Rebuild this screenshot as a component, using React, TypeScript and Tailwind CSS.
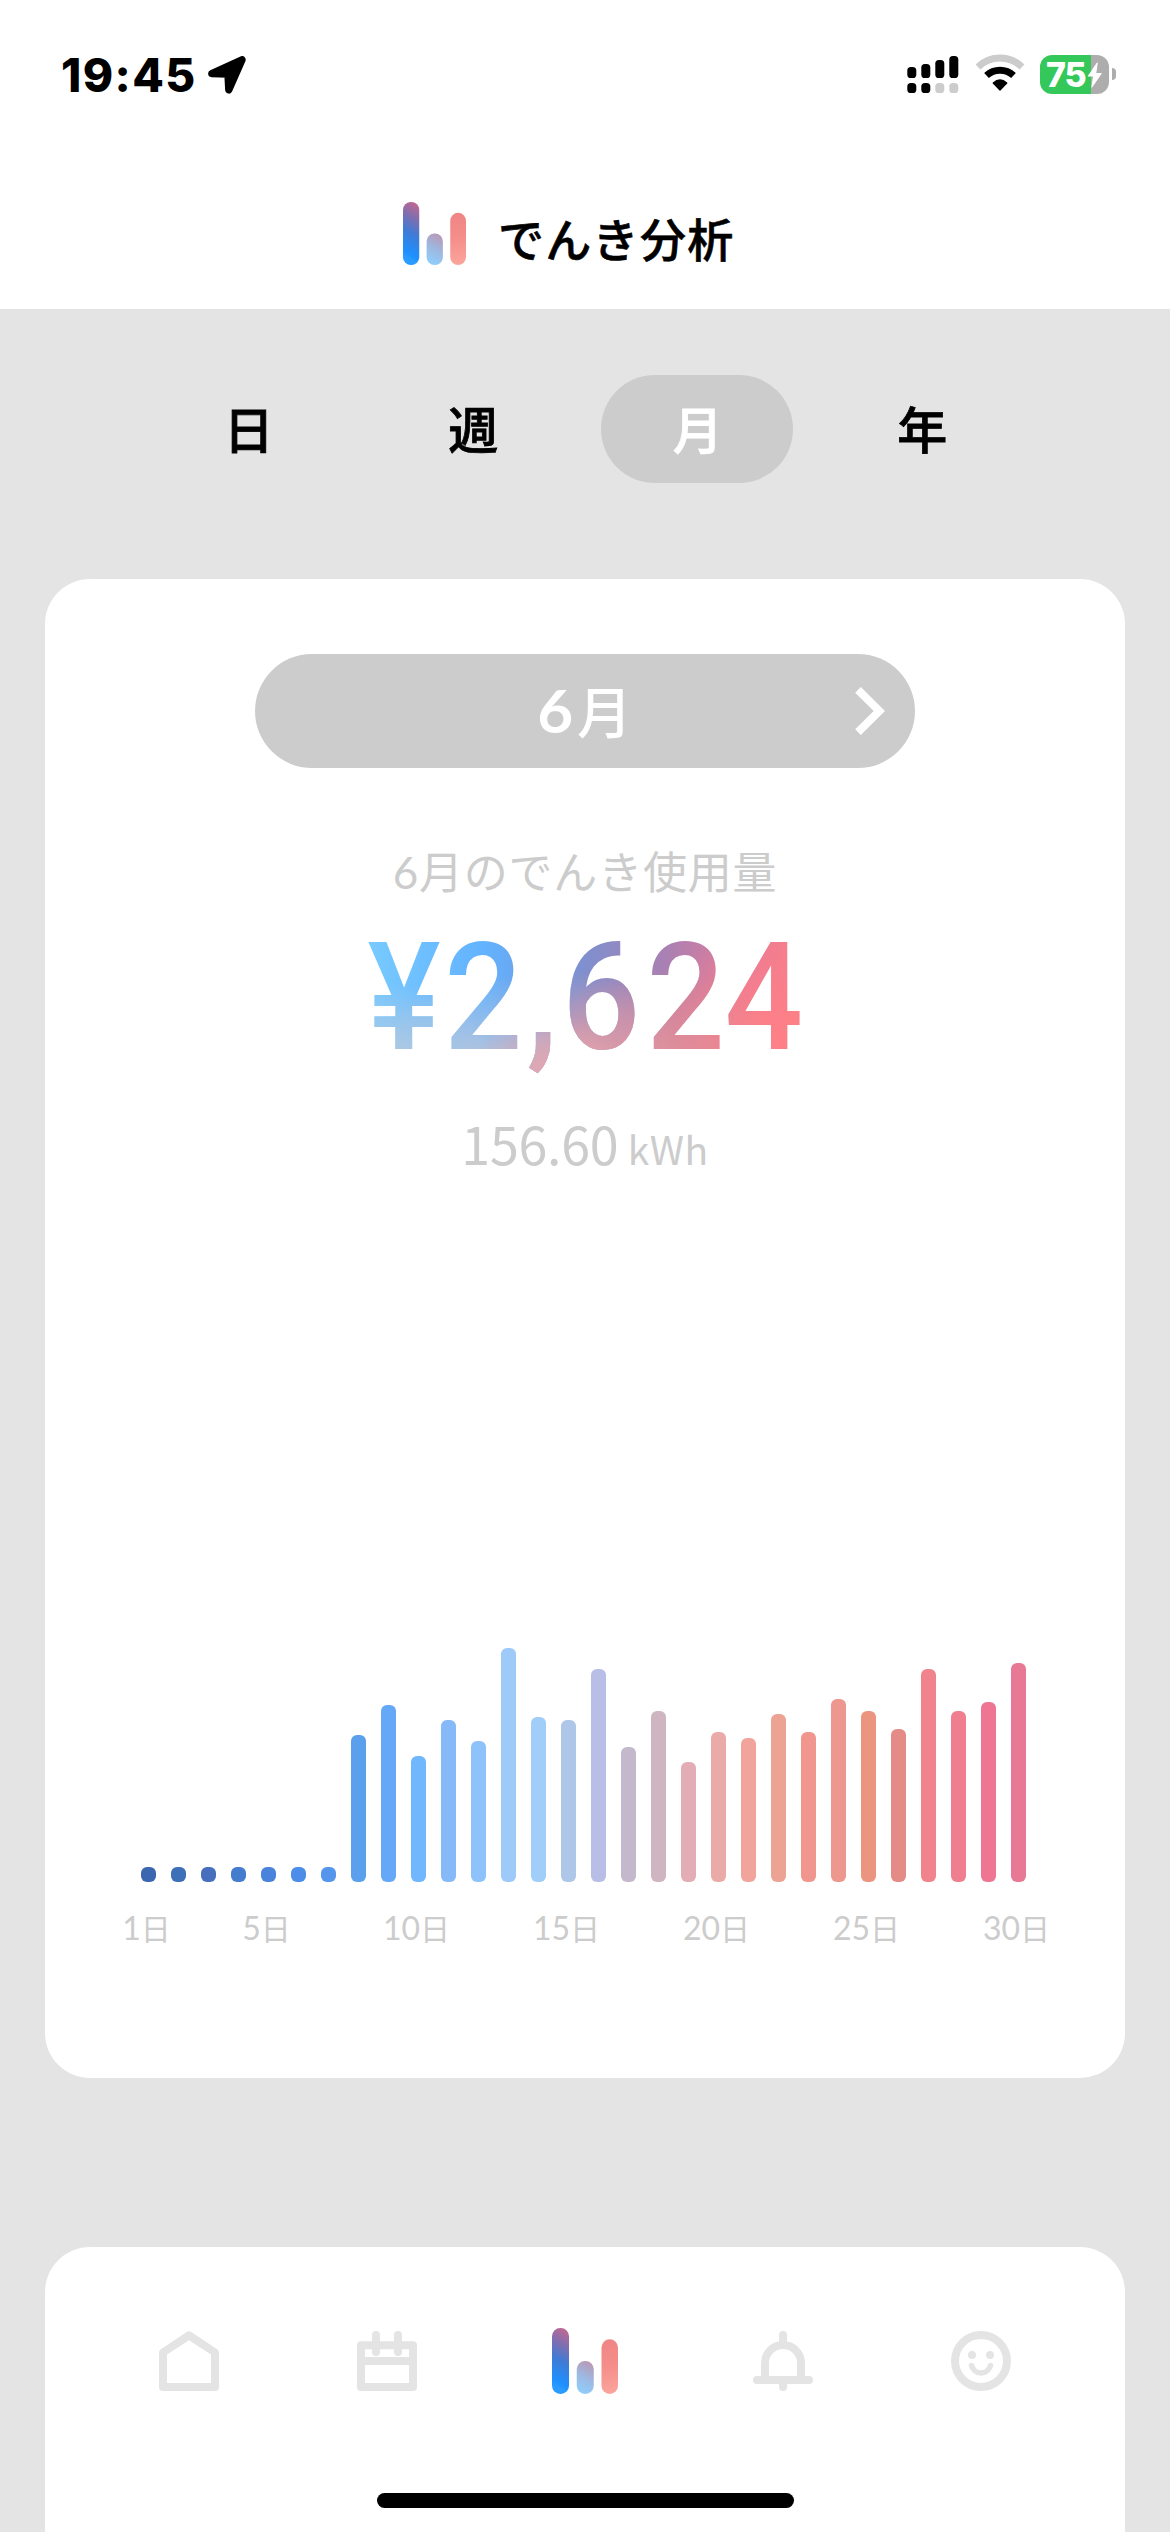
import React from "react";

const BARS: { h: number; c: string }[] = [
  { h: 15, c: "#3b67b0" },
  { h: 15, c: "#3d70b6" },
  { h: 15, c: "#476fbd" },
  { h: 15, c: "#447dce" },
  { h: 15, c: "#4a83db" },
  { h: 15, c: "#4b8de9" },
  { h: 15, c: "#5596ec" },
  { h: 147, c: "#5aa0ec" },
  { h: 177, c: "#66a8f8" },
  { h: 126, c: "#71b7fe" },
  { h: 162, c: "#85b9f8" },
  { h: 141, c: "#8dc3fa" },
  { h: 234, c: "#9dcaf9" },
  { h: 165, c: "#a1cef9" },
  { h: 162, c: "#aec6e8" },
  { h: 213, c: "#b8bee6" },
  { h: 135, c: "#c4b8cc" },
  { h: 171, c: "#cfb5bf" },
  { h: 120, c: "#e2adb5" },
  { h: 150, c: "#eaaba8" },
  { h: 144, c: "#f1a49c" },
  { h: 168, c: "#eca394" },
  { h: 150, c: "#f1968f" },
  { h: 183, c: "#ed978e" },
  { h: 171, c: "#eb9580" },
  { h: 153, c: "#e58b87" },
  { h: 213, c: "#f1838c" },
  { h: 171, c: "#ef7f8e" },
  { h: 180, c: "#ee7692" },
  { h: 219, c: "#e77995" },
];

const LABELLED = [1, 5, 10, 15, 20, 25, 30];
const TABS = ["日", "週", "月", "年"];

function LogoBars({ id, className }: { id: string; className: string }) {
  return (
    <svg viewBox="0 0 64 64" preserveAspectRatio="none" className={className}>
      <defs>
        <linearGradient id={id + "a"} gradientUnits="userSpaceOnUse" x1="24" y1="6" x2="-2" y2="54">
          <stop offset="0" stopColor="#c56790" />
          <stop offset="0.3" stopColor="#7a6fb2" />
          <stop offset="0.55" stopColor="#3f7bd6" />
          <stop offset="0.9" stopColor="#1e90ff" />
          <stop offset="1" stopColor="#2b9cff" />
        </linearGradient>
        <linearGradient id={id + "b"} gradientUnits="userSpaceOnUse" x1="42" y1="37" x2="28" y2="62">
          <stop offset="0" stopColor="#b79ab8" />
          <stop offset="0.5" stopColor="#9db9e2" />
          <stop offset="1" stopColor="#90cdfa" />
        </linearGradient>
        <linearGradient id={id + "c"} gradientUnits="userSpaceOnUse" x1="52" y1="12" x2="60" y2="64">
          <stop offset="0" stopColor="#ef8585" />
          <stop offset="0.5" stopColor="#f58f8b" />
          <stop offset="1" stopColor="#fba59d" />
        </linearGradient>
      </defs>
      <rect x="0" y="0" width="16.5" height="64" rx="8" fill={`url(#${id}a)`} />
      <rect x="24" y="32" width="16.5" height="32" rx="8" fill={`url(#${id}b)`} />
      <rect x="48" y="11" width="16" height="53" rx="8" fill={`url(#${id}c)`} />
    </svg>
  );
}

function StatusBar() {
  return (
    <div className="flex h-[150px] items-start justify-between pl-[61px] pr-[54px] font-[Inter]">
      <div className="mt-[47px] flex h-14 items-center">
        <span className="w-[147px] whitespace-nowrap text-[46px] font-extrabold leading-[56px] tracking-[1.4px] text-black">19:45</span>
        <svg viewBox="0 0 38 38" className="size-[38px]">
          <path d="M3.8 17.5 L34 3.8 L20.8 33.8 L20 18 Z" fill="#000" stroke="#000" strokeWidth="7.4" strokeLinejoin="round" />
        </svg>
      </div>
      <div className="mt-[54px] flex h-10 items-start">
        <svg viewBox="0 0 52 38" className="mt-[2px] h-[38px] w-[52px]">
          <rect x="0.3" y="11" width="9" height="11" rx="3.6" />
          <rect x="14.3" y="8" width="9" height="14" rx="3.6" />
          <rect x="28.3" y="4" width="9" height="18" rx="3.6" />
          <rect x="42.3" y="0" width="9" height="22" rx="3.6" />
          <rect x="0.3" y="27" width="9" height="10" rx="3.6" />
          <rect x="14.3" y="27" width="9" height="10" rx="3.6" />
          <rect x="28.3" y="27" width="9" height="10" rx="3.6" fill="#ccc" />
          <rect x="42.3" y="27" width="9" height="10" rx="3.6" fill="#ccc" />
        </svg>
        <svg viewBox="0 0 50 38" className="ml-[16px] h-[38px] w-[50px]" fill="none">
          <path d="M3 13 A31.5 31.5 0 0 1 47 13" stroke="#ccc" strokeWidth="7" />
          <path d="M11.5 21.5 A20 20 0 0 1 38.5 21.5" stroke="#000" strokeWidth="7" />
          <path d="M18.3 29 Q25 22.8 31.7 29 L25 36 Z" fill="#000" stroke="#000" strokeWidth="1.4" strokeLinejoin="round" />
        </svg>
        <div className="relative ml-[15px] mt-[0.5px] flex h-[39px] w-[69px] items-center overflow-hidden rounded-[12px] bg-[linear-gradient(90deg,#34c759_0_51px,#adadad_51px)]">
          <span className="ml-[6px] mt-px text-[34px] font-extrabold leading-none tracking-[-1.2px] text-white">75</span>
          <svg viewBox="0 0 18 26" className="absolute left-[47px] top-[7px] h-[26px] w-[16px]" preserveAspectRatio="none">
            <path d="M11.5 1 L1.5 14 H7.5 L5.5 25 L16 11.5 H9.8 Z" fill="#fff" stroke="#fff" strokeWidth="1.2" strokeLinejoin="round" />
          </svg>
        </div>
        <div className="ml-[3px] mt-[14px] h-[12px] w-[4px] rounded-r-full bg-[#adadad]" />
      </div>
    </div>
  );
}

function NavIcon({ children }: { children: React.ReactNode }) {
  return (
    <svg viewBox="0 0 60 60" className="size-[60px]" fill="none" stroke="#e4e4e4" strokeWidth="8" strokeLinecap="round" strokeLinejoin="round">
      {children}
    </svg>
  );
}

export default function App() {
  return (
    <div className="flex h-[2532px] w-[1170px] flex-col overflow-hidden bg-[#e4e4e4] font-['Noto_Sans_CJK_JP',sans-serif]" lang="ja">
      <header className="h-[309px] shrink-0 bg-white">
        <StatusBar />
        <div className="flex pl-[403px] pt-[52px]">
          <LogoBars id="head" className="h-[63px] w-[63px]" />
          <h1 className="ml-[32px] mt-[5px] whitespace-nowrap text-[46px] font-medium leading-[60px] tracking-[1.3px] text-black [-webkit-text-stroke:0.6px_currentColor]">でんき分析</h1>
        </div>
      </header>

      <nav className="flex h-[270px] shrink-0 justify-center gap-[32.5px] pt-[66px]">
        {TABS.map((t) => (
          <div
            key={t}
            className={
              "flex h-[108px] w-[192px] items-center justify-center rounded-full text-[50px] font-medium leading-[108px] " +
              (t === "月" ? "bg-[#ccc] text-white" : "text-black")
            }
          >
            <span className="-mt-[4px] ml-[1px] [-webkit-text-stroke:0.8px_currentColor]">{t}</span>
          </div>
        ))}
      </nav>

      <main className="mx-[45px] flex h-[1499px] shrink-0 flex-col rounded-[45px] bg-white pt-[75px] text-[#ccc]">
        <div className="relative mx-auto flex h-[114px] w-[660px] items-center justify-center rounded-full bg-[#ccc] font-medium leading-[114px] text-white">
          <span className="-mt-[1px] inline-block scale-x-105 font-[Lato,'Noto_Sans_CJK_JP',sans-serif] text-[59px] font-bold">6</span>
          <span className="-mt-[4px] ml-[5px] text-[55px]">月</span>
          <svg viewBox="0 0 30 48" className="absolute right-[30px] top-[33px] h-[48px] w-[30px]" fill="none">
            <path d="M3 2.8 L24.3 24 L3 45.2" stroke="#fff" strokeWidth="8" />
          </svg>
        </div>

        <p className="mt-[75px] h-[52px] whitespace-nowrap text-center text-[44px] leading-[54px] tracking-[0.8px]">
          <span className="font-[Lato]">6</span>月のでんき使用量
        </p>

        <div className="mt-[25px] flex justify-center">
          <span className="h-[155px] origin-center scale-x-[0.91] whitespace-nowrap bg-[radial-gradient(ellipse_24%_50%_at_5%_90%,#b4c9e0,transparent),radial-gradient(ellipse_18%_38%_at_42%_98%,#e6a5ae,transparent),radial-gradient(ellipse_24%_60%_at_26%_94%,#bac4da,transparent),radial-gradient(ellipse_24%_65%_at_50%_97%,#e0a0aa,transparent),radial-gradient(ellipse_30%_60%_at_66%_92%,#e38f98,transparent),radial-gradient(ellipse_30%_70%_at_90%_80%,#ff8085,transparent),linear-gradient(90deg,#78caff_0%,#62b2ff_27%,#7f8fce_50%,#ab80b2_69%,#ea7c98_88%,#fb8088_100%)] bg-clip-text font-[Roboto] text-[151px] font-medium leading-[155px] text-transparent">
            ¥<span className="ml-[4px] tracking-[5px]">2</span><span className="tracking-[5px]">,6</span><span className="ml-[2px]">24</span>
          </span>
        </div>

        <p className="mt-[38px] h-[58px] whitespace-nowrap text-center text-[52px] leading-[60px] tracking-[-0.3px]">
          156.60 <span className="-ml-[2px] text-[39px] tracking-[0.5px]">kWh</span>
        </p>

        <div className="flex h-[711px] shrink-0 items-end gap-[15px] pl-[96px]">
          {BARS.map((b, i) => (
            <div key={i} className="w-[15px] shrink-0 rounded-[6px]" style={{ height: b.h, backgroundColor: b.c }} />
          ))}
        </div>
        <div className="mt-[26px] flex h-[40px] gap-[15px] pl-[94px] text-[30px] leading-[38px]">
          {BARS.map((_, i) => (
            <div key={i} className="flex w-[15px] shrink-0 justify-center">
              {LABELLED.includes(i + 1) && (
                <span className="flex whitespace-nowrap">
                  <span className="font-[Lato] text-[32px] leading-[40px]">{i + 1}</span>
                  <span>日</span>
                </span>
              )}
            </div>
          ))}
        </div>
      </main>

      <footer className="mx-[45px] mt-[169px] flex h-[285px] shrink-0 flex-col items-center rounded-t-[45px] bg-white">
        <div className="mt-[81px] flex h-[66px] w-full items-center justify-center gap-[138px]">
          <NavIcon>
            <path d="M4 21.5 L30 4.3 L56 21.5 V56 H4 Z" />
          </NavIcon>
          <NavIcon>
            <path d="M4 14.3 H56 V56 H4 Z M4 30 H56 M19 4 V21 M41 4 V21" />
          </NavIcon>
          <LogoBars id="nav" className="-mx-[3px] h-[66px] w-[66px]" />
          <NavIcon>
            <path d="M4 49 H56 M12 49 V32 A18 18 0 0 1 48 32 V49 M30 4 V13 M30 49 V56" />
          </NavIcon>
          <NavIcon>
            <circle cx="30" cy="30" r="26" />
            <path d="M20.5 34.5 Q23 42 30 42 T39.5 34.5" strokeWidth="5.5" />
            <circle cx="21" cy="24" r="4" fill="#e4e4e4" stroke="none" />
            <circle cx="39" cy="24" r="4" fill="#e4e4e4" stroke="none" />
          </NavIcon>
        </div>
        <div className="mt-[99px] h-[15px] w-[417px] rounded-full bg-black" />
      </footer>
    </div>
  );
}
